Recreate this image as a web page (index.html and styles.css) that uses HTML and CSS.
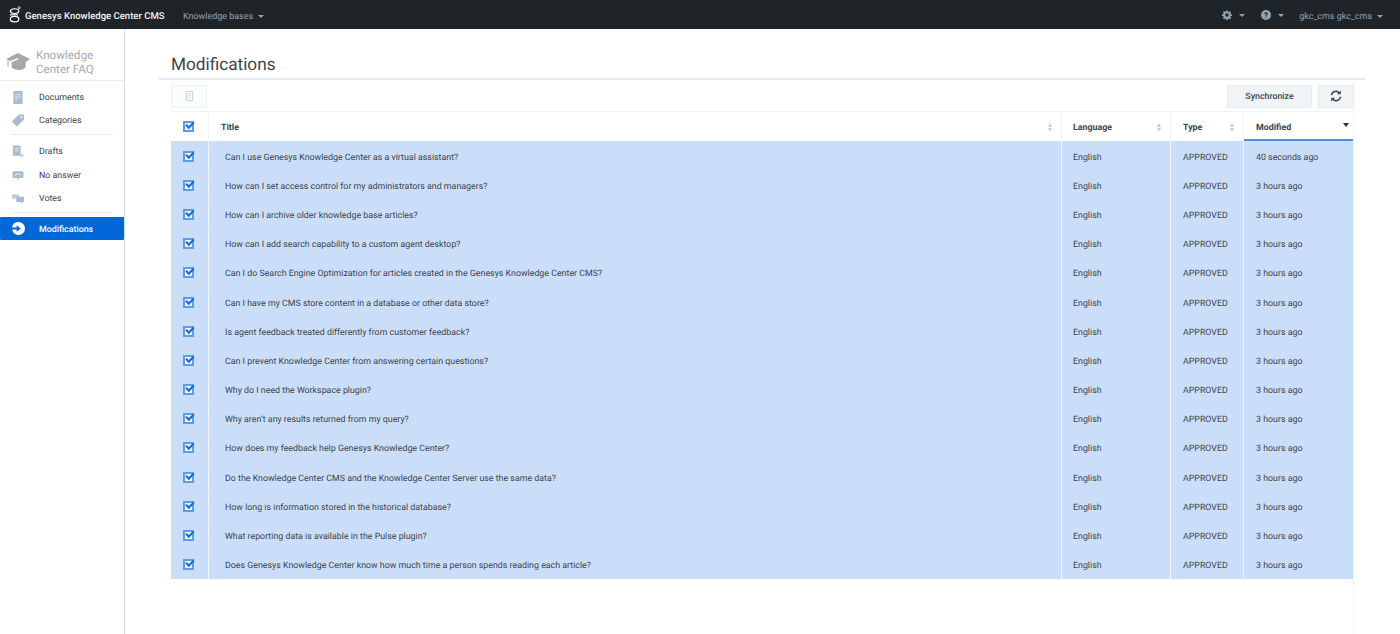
FILE: index.html
```html
<!DOCTYPE html>
<html lang="en">
<head>
<meta charset="utf-8">
<title>Modifications</title>
<link rel="stylesheet" href="styles.css">
</head>
<body>
<header class="topbar">
  <div class="brand">
    <svg class="logo" viewBox="0 0 14 20"><circle cx="12" cy="2" r="1.2" fill="none" stroke="#fff" stroke-width=".9"/><ellipse cx="6.500" cy="6" rx="5" ry="2.800" fill="none" stroke="#fff" stroke-width="1.400"/><path d="M1 10.400h9.500" stroke="#fff" stroke-width="1.400"/><ellipse cx="6.500" cy="15.500" rx="5" ry="3.200" fill="none" stroke="#fff" stroke-width="1.400"/></svg>
    <span class="brand-name">Genesys Knowledge Center CMS</span>
  </div>
  <span class="nav-link kb">Knowledge bases <i class="caret"></i></span>
  <div class="top-right">
    <span class="nav-link tool"><svg class="top-icon" viewBox="0 0 24 24"><path fill="#8fa3b3" fill-rule="evenodd" d="M10 1h4l.6 3.1 1.8.8L19 3.100l2.900 2.900-1.800 2.600.8 1.800L24 10v4l-3.100.6-.8 1.800 1.800 2.600-2.900 2.900-2.600-1.800-1.800.8L14 24h-4l-.6-3.100-1.800-.8L5 21.900 2.100 19l1.800-2.600-.8-1.800L0 14v-4l3.100-.6.800-1.800L2.100 5 5 2.100l2.600 1.800 1.800-.8zM12 8a4 4 0 1 0 0 8 4 4 0 0 0 0-8z"/></svg><i class="caret"></i></span>
    <span class="nav-link tool help"><svg class="top-icon" viewBox="0 0 24 24"><circle cx="12" cy="12" r="12" fill="#8fa3b3"/><path d="M8 9.500c0-2.500 1.800-4 4.200-4 2.300 0 4 1.400 4 3.500 0 2.800-3.200 2.800-3.200 5.200h-2.400c0-3.500 3-3.500 3-5 0-.9-.6-1.500-1.500-1.500-1 0-1.500.7-1.600 1.800z" fill="#1f2429"/><rect x="10.600" y="15.500" width="2.500" height="2.600" fill="#1f2429"/></svg><i class="caret"></i></span>
    <span class="nav-link user">gkc_cms gkc_cms <i class="caret"></i></span>
  </div>
</header>
<div class="shell">
  <aside class="sidebar">
    <div class="kb-title">
      <svg class="cap" viewBox="0 0 24 18"><path fill="#a3a8ac" d="M12 0 0 6l4 2.100 8-3 .6 1.200-7 3V14c2 3 11 5 14 0V9.200L24 6z"/><path fill="#a3a8ac" d="M1.500 7.500h1v6h-1z"/></svg>
      <span>Knowledge<br>Center FAQ</span>
    </div>
    <nav class="menu">
      <a class="item"><svg class="ico" viewBox="0 0 12 14"><path fill="#a9bccd" d="M1 0h10v14H1z"/><path stroke="#e8eef3" d="M3 4h6M3 6.500h6M3 9h3"/></svg>Documents</a>
      <a class="item"><svg class="ico" viewBox="0 0 14 14"><path fill="#a9bccd" d="M8 0h6v6l-7.500 7.500a1 1 0 0 1-1.400 0L.5 8.900a1 1 0 0 1 0-1.400z"/><circle cx="11" cy="3" r="1.100" fill="#fff"/></svg>Categories</a>
      <div class="sep sep-a"></div>
      <a class="item"><svg class="ico" viewBox="0 0 14 14"><path fill="#a9bccd" d="M1 0h9v12H1z"/><path stroke="#e8eef3" d="M3 3.500h5M3 6h5"/><path stroke="#a9bccd" d="M11.500 9v5M9 11.500h5"/></svg>Drafts</a>
      <a class="item"><svg class="ico" viewBox="0 0 14 14"><path fill="#a9bccd" d="M2 2h10a1.500 1.500 0 0 1 1.500 1.500v5A1.500 1.500 0 0 1 12 10H8l-2 3V10H2A1.500 1.500 0 0 1 .5 8.500v-5A1.500 1.500 0 0 1 2 2z"/><path fill="none" stroke="#fff" d="M3.500 7C5 4.500 9 4.500 10.500 7"/></svg>No answer</a>
      <a class="item"><svg class="ico" viewBox="0 0 14 14"><path fill="#c2ced8" d="M0 2h8v5H3L1.500 8.500V7H0z"/><path fill="#a9bccd" d="M5 5h9v6h-2v2l-2-2H5z"/></svg>Votes</a>
      <div class="sep sep-b"></div>
      <a class="item active"><svg class="ico big" viewBox="0 0 14 14"><path fill="#fff" d="M7 0a7 7 0 1 1-6.900 8.200H5v2.300L9.500 7 5 3.500v2.300H.1A7 7 0 0 1 7 0z"/></svg>Modifications</a>
    </nav>
  </aside>
  <main class="content">
    <h1 class="heading">Modifications</h1>
    <div class="panel">
      <div class="toolbar">
        <button class="btn doc"><svg class="doc-ico" viewBox="0 0 12 14"><path fill="none" stroke="#b0bdc8" d="M1.500.5h9v13h-9z"/><path stroke="#c3ced7" d="M3.500 4h5M3.500 6.500h5M3.500 9h3"/></svg></button>
        <button class="btn sync">Synchronize</button>
        <button class="btn refresh"><svg class="ref-ico" viewBox="0 0 16 16"><path fill="none" stroke="#3f4a52" stroke-width="2" d="M2 7a6 6 0 0 1 10.500-3M14 9a6 6 0 0 1-10.500 3"/><path fill="#3f4a52" d="M14.500.8v5h-5zM1.500 15.200v-5h5z"/></svg></button>
      </div>
      <div class="grid" id="grid">
        <div class="row head">
          <div class="cell chk"><span class="box"></span></div>
          <div class="cell title">Title<i class="sort"></i></div>
          <div class="cell lang">Language<i class="sort"></i></div>
          <div class="cell type">Type<i class="sort"></i></div>
          <div class="cell mod current">Modified<i class="down"></i></div>
        </div>
        <div class="row"><div class="cell chk"><span class="box"></span></div><div class="cell title">Can I use Genesys Knowledge Center as a virtual assistant?</div><div class="cell lang">English</div><div class="cell type">APPROVED</div><div class="cell mod">40 seconds ago</div></div>
        <div class="row"><div class="cell chk"><span class="box"></span></div><div class="cell title">How can I set access control for my administrators and managers?</div><div class="cell lang">English</div><div class="cell type">APPROVED</div><div class="cell mod">3 hours ago</div></div>
        <div class="row"><div class="cell chk"><span class="box"></span></div><div class="cell title">How can I archive older knowledge base articles?</div><div class="cell lang">English</div><div class="cell type">APPROVED</div><div class="cell mod">3 hours ago</div></div>
        <div class="row"><div class="cell chk"><span class="box"></span></div><div class="cell title">How can I add search capability to a custom agent desktop?</div><div class="cell lang">English</div><div class="cell type">APPROVED</div><div class="cell mod">3 hours ago</div></div>
        <div class="row"><div class="cell chk"><span class="box"></span></div><div class="cell title">Can I do Search Engine Optimization for articles created in the Genesys Knowledge Center CMS?</div><div class="cell lang">English</div><div class="cell type">APPROVED</div><div class="cell mod">3 hours ago</div></div>
        <div class="row"><div class="cell chk"><span class="box"></span></div><div class="cell title">Can I have my CMS store content in a database or other data store?</div><div class="cell lang">English</div><div class="cell type">APPROVED</div><div class="cell mod">3 hours ago</div></div>
        <div class="row"><div class="cell chk"><span class="box"></span></div><div class="cell title">Is agent feedback treated differently from customer feedback?</div><div class="cell lang">English</div><div class="cell type">APPROVED</div><div class="cell mod">3 hours ago</div></div>
        <div class="row"><div class="cell chk"><span class="box"></span></div><div class="cell title">Can I prevent Knowledge Center from answering certain questions?</div><div class="cell lang">English</div><div class="cell type">APPROVED</div><div class="cell mod">3 hours ago</div></div>
        <div class="row"><div class="cell chk"><span class="box"></span></div><div class="cell title">Why do I need the Workspace plugin?</div><div class="cell lang">English</div><div class="cell type">APPROVED</div><div class="cell mod">3 hours ago</div></div>
        <div class="row"><div class="cell chk"><span class="box"></span></div><div class="cell title">Why aren’t any results returned from my query?</div><div class="cell lang">English</div><div class="cell type">APPROVED</div><div class="cell mod">3 hours ago</div></div>
        <div class="row"><div class="cell chk"><span class="box"></span></div><div class="cell title">How does my feedback help Genesys Knowledge Center?</div><div class="cell lang">English</div><div class="cell type">APPROVED</div><div class="cell mod">3 hours ago</div></div>
        <div class="row"><div class="cell chk"><span class="box"></span></div><div class="cell title">Do the Knowledge Center CMS and the Knowledge Center Server use the same data?</div><div class="cell lang">English</div><div class="cell type">APPROVED</div><div class="cell mod">3 hours ago</div></div>
        <div class="row"><div class="cell chk"><span class="box"></span></div><div class="cell title">How long is information stored in the historical database?</div><div class="cell lang">English</div><div class="cell type">APPROVED</div><div class="cell mod">3 hours ago</div></div>
        <div class="row"><div class="cell chk"><span class="box"></span></div><div class="cell title">What reporting data is available in the Pulse plugin?</div><div class="cell lang">English</div><div class="cell type">APPROVED</div><div class="cell mod">3 hours ago</div></div>
        <div class="row"><div class="cell chk"><span class="box"></span></div><div class="cell title">Does Genesys Knowledge Center know how much time a person spends reading each article?</div><div class="cell lang">English</div><div class="cell type">APPROVED</div><div class="cell mod">3 hours ago</div></div>
      </div>
    </div>
  </main>
</div>
</body>
</html>
```
FILE: styles.css
```css
* { box-sizing: border-box; }
html, body { margin: 0; height: 100%; overflow: hidden; }
body { font-family: Roboto, "Liberation Sans", sans-serif; font-size: 8.840px; color: #3d4449; background: #fff; text-rendering: geometricPrecision; }

.topbar { height: 29px; background: #1f2429; display: flex; align-items: center; color: #8fa3b3; }
.brand { display: flex; align-items: center; padding-left: 9px; width: 183px; }
.logo { width: 12px; height: 17px; margin-right: 4px; }
.brand-name { color: #f2f4f5; font-weight: 500; font-size: 9.550px; white-space: nowrap; padding-top: 4px; }
.nav-link { display: inline-flex; align-items: center; font-size: 8.950px; white-space: nowrap; gap: 4px; }
.kb, .user { padding-top: 4px; }
.caret { display: inline-block; width: 0; height: 0; border-left: 3px solid transparent; border-right: 3px solid transparent; border-top: 3px solid #8fa3b3; margin-left: 1px; }
.tool .caret { margin-top: 2px; }
.top-right { margin-left: auto; display: flex; align-items: center; padding-right: 17px; }
.top-icon { width: 10px; height: 10px; margin-right: 2px; }
.tool { margin-right: 16px; }
.help { margin-right: 15px; }

.shell { display: flex; height: 605px; }
.sidebar { width: 125px; flex: none; border-right: 1px solid #d5dde5; }
.kb-title { height: 52px; border-bottom: 1px solid #e9edf0; display: flex; align-items: center; padding: 14px 0 0 6px; color: #a3a8ac; font-size: 11.600px; line-height: 14px; gap: 6px; }
.cap { width: 24px; height: 18px; flex: none; }
.menu { display: flex; flex-direction: column; padding-top: 4px; }
.item { height: 23.400px; display: flex; align-items: center; padding: 2px 0 0 12px; color: #3d4449; }
.ico { width: 12px; height: 13px; margin: -1px 15px 0 0; flex: none; }
.ico.big { width: 13px; height: 13px; margin: -3px 14px 0 0; }
.sep { height: 1px; background: #e9edf0; margin-left: 11px; margin-right: 11px; }
.sep-a { margin-top: 2.500px; margin-bottom: 4.500px; }
.sep-b { margin-top: 2.500px; margin-bottom: 3.500px; }
.item.active { background: #0067d8; color: #fff; font-weight: 500; height: 23px; border-radius: 1px; padding-top: 4px; }

.content { flex: 1; min-width: 0; padding: 0 35px 0 34px; }
.heading { margin: 0; height: 51px; padding: 26px 0 0 12px; font-size: 17.200px; line-height: 20px; font-weight: 400; color: #3d4449; border-bottom: 2px solid #e6e9ec; }
.panel { margin: 0 11px 0 12px; height: 554px; border-right: 1px solid #f0f2f4; }
.toolbar { height: 31px; display: flex; align-items: center; padding-top: 1px; margin-right: -1px; }
.btn { height: 23px; background: #f0f4f7; border: 1px solid #e5eaee; border-radius: 1px; font: 500 8.840px Roboto, "Liberation Sans", sans-serif; color: #3d4449; padding: 0; display: flex; align-items: center; justify-content: center; text-rendering: geometricPrecision; }
.doc { width: 36px; background: #fbfcfd; border-color: #eef1f4; }
.doc-ico { width: 9px; height: 10px; }
.sync { width: 85px; margin-left: auto; padding-top: 2px; }
.refresh { width: 36px; margin-left: 6px; }
.ref-ico { width: 12px; height: 12px; }

.row { display: grid; grid-template-columns: 38px 853px 109px 73px 109px; height: 29.200px; background: #cadefa; }
.row.head { height: 30px; background: #fff; font-weight: 700; color: #3d4449; border-top: 1px solid #eef0f2; }
.cell { display: flex; align-items: center; border-right: 1px solid #f0f5fc; padding: 4px 0 0 11px; position: relative; white-space: nowrap; }
.head .cell { border-right-color: #f1f3f5; padding-top: 2px; }
.cell.chk { justify-content: center; padding: 1px 2px 0 0; }
.head .cell.chk { padding-top: 0; }
.title { padding-left: 16px; }
.head .title { padding-left: 12px; }
.type, .mod { padding-left: 12px; }
.mod { border-right: 0; }
.head .current { box-shadow: inset 0 -2px 0 #4a90e2; }
.box { width: 11px; height: 11px; border: 2px solid #5a9dec; background: #eef5ff; position: relative; }
.box::after { content: ""; position: absolute; left: 0.500px; top: -1px; width: 5.500px; height: 3px; border-left: 2px solid #1769d2; border-bottom: 2px solid #1769d2; transform: rotate(-45deg); }
.sort { position: absolute; right: 8px; top: 50%; width: 5px; height: 9px; margin-top: -4px; }
.sort::before, .sort::after { content: ""; position: absolute; left: 0; width: 0; height: 0; border-left: 2.500px solid transparent; border-right: 2.500px solid transparent; }
.sort::before { top: 0; border-bottom: 4px solid #c6cdd3; }
.sort::after { bottom: 0; border-top: 4px solid #c6cdd3; }
.down { position: absolute; right: 4px; top: 11px; width: 0; height: 0; border-left: 3px solid transparent; border-right: 3px solid transparent; border-top: 4px solid #2b3035; }
```
